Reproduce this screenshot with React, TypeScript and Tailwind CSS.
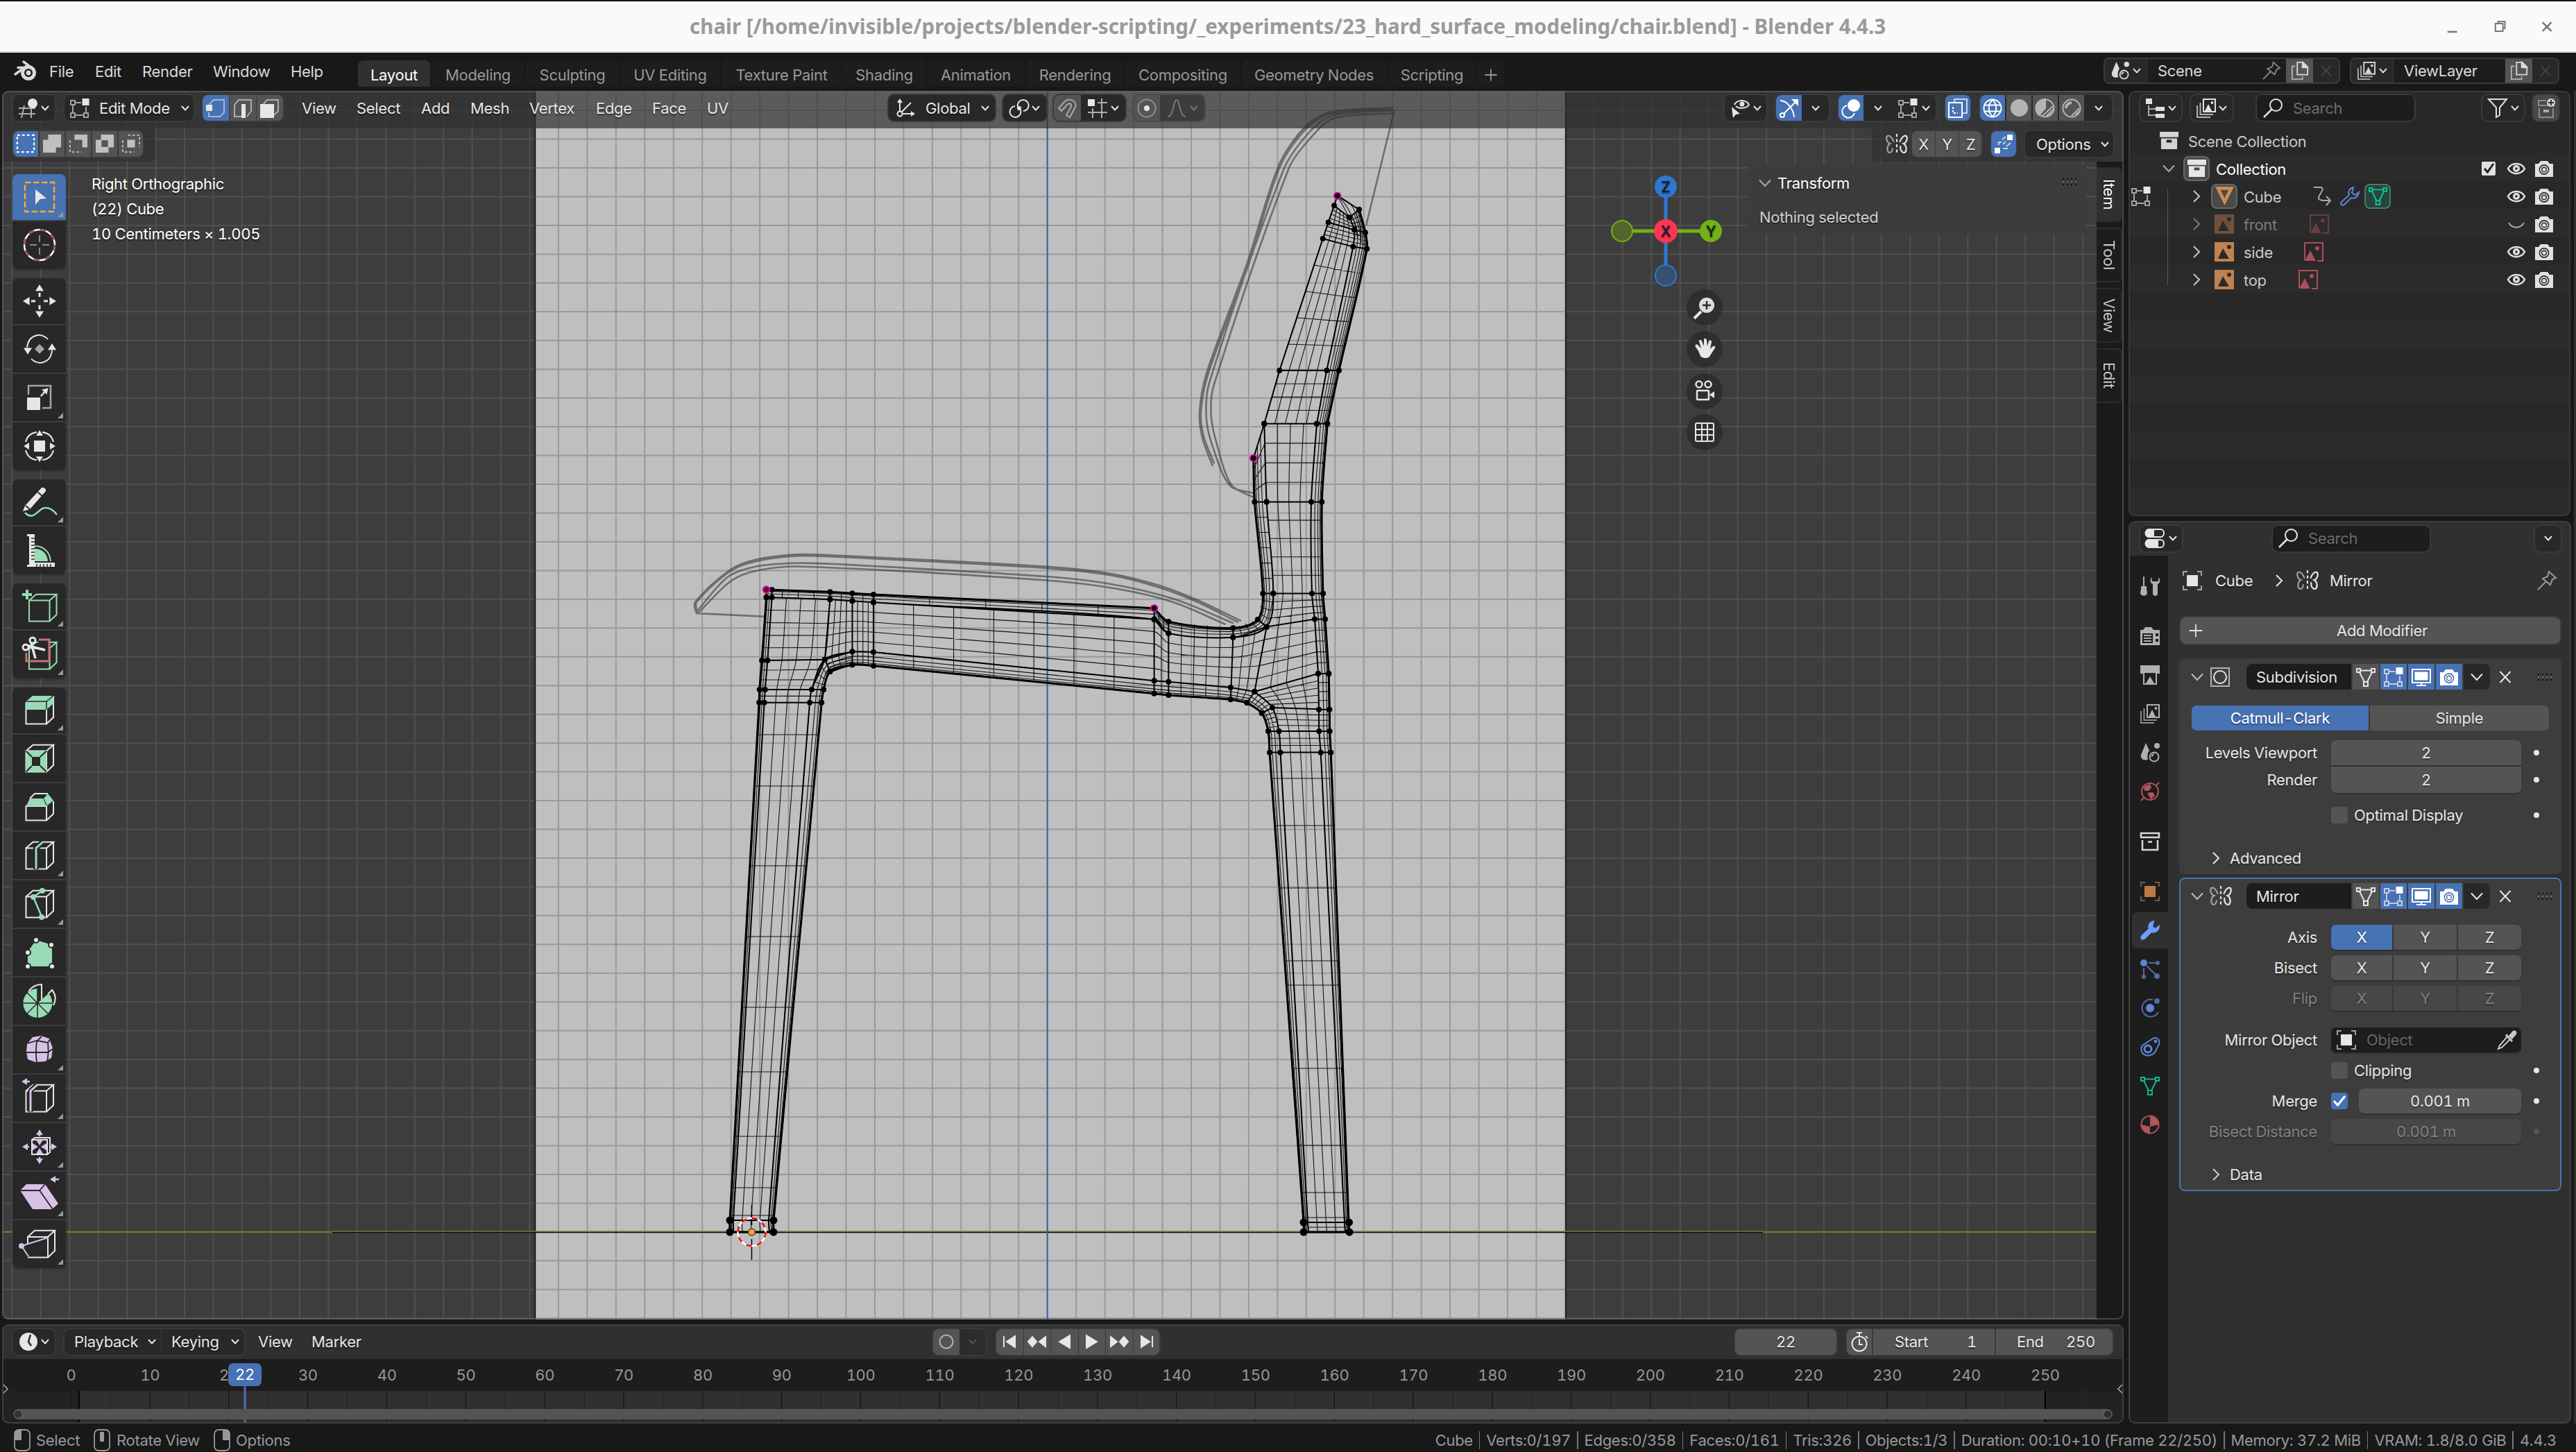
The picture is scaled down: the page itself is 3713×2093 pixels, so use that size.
import React from "react";

type Pt = [number, number];
type P = { children?: React.ReactNode; className?: string; size?: number };

/* ---------- primitives ---------- */
const Ico = ({ children, className = "", size = 28 }: P) => (
  <svg width={size} height={size} viewBox="0 0 28 28" fill="none" stroke="currentColor" strokeWidth={2} className={`shrink-0 overflow-visible ${className}`}>
    {children}
  </svg>
);
const Chev = ({ className = "" }: P) => (
  <svg width="12" height="8" viewBox="0 0 12 8" fill="none" stroke="currentColor" strokeWidth="2" className={`shrink-0 ${className}`}>
    <path d="M1 1L6 6.5L11 1" />
  </svg>
);
const ChevDown = ({ className = "" }: P) => (
  <svg width="18" height="12" viewBox="0 0 18 12" fill="none" stroke="currentColor" strokeWidth="2" className={`shrink-0 ${className}`}>
    <path d="M1 1.5L9 10L17 1.5" />
  </svg>
);
const ChevRight = ({ className = "" }: P) => (
  <svg width="12" height="18" viewBox="0 0 12 18" fill="none" stroke="currentColor" strokeWidth="2" className={`shrink-0 ${className}`}>
    <path d="M2 1L10 9L2 17" />
  </svg>
);
const Grip = ({ className = "" }: P) => (
  <svg width="22" height="12" viewBox="0 0 22 12" className={`shrink-0 ${className}`}>
    {[0, 1, 2, 3].map((i) =>
      [0, 1, 2].map((j) => <rect key={`${i}${j}`} x={i * 6 + 1} y={j * 4 + 1} width="2" height="2" fill={j === 1 ? "#777" : "#0c0c0c"} />)
    )}
  </svg>
);

/* ---------- 28px icons ---------- */
const ring = (cx: number, cy: number, r: number) => `M${cx} ${cy - r}A${r} ${r} 0 1 0 ${cx} ${cy + r}A${r} ${r} 0 1 0 ${cx} ${cy - r}Z`;
const IMeshEdit = (p: P) => (
  <Ico {...p}>
    <g opacity=".65">
      <rect x="1" y="3" width="6" height="6" /><rect x="1" y="21" width="6" height="6" /><rect x="20" y="21" width="6" height="6" />
      <path d="M7 6H16M4 9V21M7 24H20M23 12V21" />
    </g>
    <rect x="17.500" y="0" width="10" height="10" fill="currentColor" stroke="none" />
  </Ico>
);
const IMesh = (p: P) => (
  <Ico {...p}>
    <rect x="1" y="2" width="5" height="5" /><rect x="22" y="2" width="5" height="5" /><rect x="11" y="21" width="6" height="6" />
    <path d="M6 4.500H22M5 7L12 21M23 7L16 21" />
  </Ico>
);
const IScene = (p: P) => (
  <Ico {...p}>
    <path d="M8 0L13 11C10 14 10 20 11 24C4 26 0 22 1 17Z" fill="currentColor" stroke="none" />
    <circle cx="24" cy="4" r="4" fill="currentColor" stroke="none" />
    <circle cx="20" cy="20" r="6.500" /><path d="M16.500 20A3.500 3.500 0 0 1 20 16.500" />
  </Ico>
);
const IPin = (p: P) => (
  <Ico {...p}>
    <path d="M17 1L27 10L22 12L19 20L8 11L15 8ZM12.500 15.500L1 27" />
  </Ico>
);
const ICopy = (p: P) => (
  <Ico {...p}>
    <path d="M10 1H19L26 8V20H10Z" /><path d="M18 1L26 9H18Z" fill="currentColor" /><path d="M7 7H2V27H18V23" opacity=".7" />
  </Ico>
);
const ILayers = (p: P) => (
  <Ico {...p}>
    <rect x="10" y="1" width="17" height="18" /><path d="M12 18L17 8L22 18Z" fill="currentColor" stroke="none" />
    <circle cx="22.500" cy="6" r="2" fill="currentColor" stroke="none" />
    <path d="M5.500 6V23H24M1 10V27H20" opacity=".75" />
  </Ico>
);
const IX = (p: P) => (
  <Ico {...p}><path d="M6.500 6L21.500 22M21.500 6L6.500 22" /></Ico>
);
const ISearch = (p: P) => (
  <Ico {...p}><circle cx="18.500" cy="9.500" r="8.500" /><path d="M12.500 15.500L1 27" strokeWidth="2.500" /></Ico>
);
const IMirror = (p: P) => (
  <Ico {...p}>
    <path d="M14 0V28" strokeDasharray="4 3" />
    <path d="M10 11C8 5 4 1 1 3C-1 6 1 12 5 13C1 15 0 22 3 25C6 26 9 23 8 19" opacity=".6" />
    <path d="M18 11C20 5 24 1 27 3C29 6 27 12 23 13C27 15 28 22 25 25C22 26 18 23 19 16" />
  </Ico>
);
const IObject = (p: P) => (
  <Ico {...p}>
    <rect x="6" y="6" width="16" height="16" fill="currentColor" stroke="none" />
    <path d="M1 7V1H7M21 1H27V7M27 21V27H21M7 27H1V21" opacity=".65" />
  </Ico>
);
const IMonitor = (p: P) => (
  <Ico {...p}>
    <rect x="1" y="3" width="26" height="19" /><rect x="4.500" y="6.500" width="19" height="12" fill="currentColor" stroke="none" />
    <path d="M14 22V25M7 26H21" />
  </Ico>
);
const ICamera = (p: P) => (
  <Ico {...p}>
    <path
      fillRule="evenodd"
      d={"M1 7H6L9 3H19L22 7H27V26H1Z" + ring(14, 15.5, 7.4) + ring(14, 15.5, 5.8) + ring(14, 15.5, 4)}
      fill="currentColor"
      stroke="none"
    />
    <circle cx="14" cy="15.500" r="2.600" fill="currentColor" stroke="none" />
  </Ico>
);
const IEye = (p: P) => (
  <Ico {...p}>
    <path d="M2 14C7 4.500 21 4.500 26 14C21 23.500 7 23.500 2 14Z" strokeWidth="2.500" /><circle cx="14" cy="14" r="5" fill="currentColor" stroke="none" />
    <circle cx="14" cy="14" r="1.800" fill="#282828" stroke="none" />
  </Ico>
);
const ICollection = (p: P) => (
  <Ico {...p}>
    <path d="M0 1H28V9H0Z" fill="currentColor" stroke="none" /><path fillRule="evenodd" d="M2 11H26V27H2ZM10 13V17H18V13Z" fill="currentColor" stroke="none" />
  </Ico>
);
const ICollectionLine = (p: P) => (
  <Ico {...p}><path d="M1 2H27V8H1ZM3 12V26H25V12M11 14.500H17" strokeWidth="2.500" /></Ico>
);
const IImage = (p: P) => (
  <Ico {...p}>
    <path fillRule="evenodd" d="M0 0H28V28H0ZM5 24H21L12 9ZM21 4A3 3 0 1 0 21 10A3 3 0 1 0 21 4Z" fill="currentColor" stroke="none" />
  </Ico>
);
const IImageData = (p: P) => (
  <Ico {...p}>
    <path d="M1 26V1H27V27H19" /><path d="M1 27L9 12L17 27Z" fill="currentColor" stroke="none" /><circle cx="19" cy="9" r="3" fill="currentColor" stroke="none" />
  </Ico>
);
const IWrench = ({ fill, ...p }: P & { fill?: boolean }) => (
  <Ico {...p}>
    <path d="M19 1C13 3 11 7 13 12L2 22C0 26 3 28 6 26L16 16C21 18 26 15 27 8L22 12L17 9Z" fill={fill ? "currentColor" : "none"} />
  </Ico>
);
const IBall = (p: P) => <Ico {...p}><circle cx="14" cy="14" r="13" fill="currentColor" stroke="none" /></Ico>;

/* ---------- chair mesh ---------- */
const lerp = (a: Pt, b: Pt, t: number): Pt => [a[0] + (b[0] - a[0]) * t, a[1] + (b[1] - a[1]) * t];
const line = (pts: Pt[]) => "M" + pts.map((p) => `${p[0].toFixed(1)} ${p[1].toFixed(1)}`).join("L");
const smooth = (p: Pt[]) => {
  let d = `M${p[0][0]} ${p[0][1]}`;
  for (let i = 0; i < p.length - 1; i++) {
    const a = p[Math.max(0, i - 1)], b = p[i], c = p[i + 1], e = p[Math.min(p.length - 1, i + 2)];
    const len = Math.hypot(c[0] - b[0], c[1] - b[1]);
    const tan = (m: Pt, n: Pt): Pt => {
      const l = Math.hypot(n[0] - m[0], n[1] - m[1]) || 1;
      return [((n[0] - m[0]) / l) * len * 0.3, ((n[1] - m[1]) / l) * len * 0.3];
    };
    const t1 = tan(a, c), t2 = tan(b, e);
    d += `C${(b[0] + t1[0]).toFixed(1)} ${(b[1] + t1[1]).toFixed(1)} ${(c[0] - t2[0]).toFixed(1)} ${(c[1] - t2[1]).toFixed(1)} ${c[0].toFixed(1)} ${c[1].toFixed(1)}`;
  }
  return d;
};
/* fine wires between two rails, plus rungs in each span; bias > 1 crowds the wires towards rail b */
const loft = (a: Pt[], b: Pt[], wires: number, rungs: number[], bias = 1) => {
  const spans = Math.min(a.length, b.length) - 1;
  let d = "";
  for (let k = 0; k <= wires; k++) {
    const t = 1 - Math.pow(1 - k / wires, bias);
    d += smooth(a.slice(0, spans + 1).map((p, i) => lerp(p, b[i], t)));
  }
  rungs.slice(0, spans).forEach((n, i) => {
    for (let k = 1; k <= n; k++) d += line([lerp(a[i], a[i + 1], k / (n + 1)), lerp(b[i], b[i + 1], k / (n + 1))]);
  });
  return d;
};

const LA: Pt[] = [[1104.6, 861], [1098.2, 952], [1094.8, 994], [1094.2, 1012.7], [1052, 1759], [1052, 1776]];
const LB: Pt[] = [[1112.6, 861], [1106.3, 952], [1102.8, 994], [1101.7, 1012.7], [1057, 1759], [1057, 1776]];
const LC: Pt[] = [[1196.4, 864], [1188.9, 950.7], [1170, 994], [1167.1, 1012.7], [1108, 1759], [1109, 1776]];
const LC2: Pt[] = [[1228.5, 939.3], [1188.9, 950.7], [1170, 994], [1167.1, 1012.7], [1108, 1759], [1109, 1776]];
const LD: Pt[] = [[1228.5, 958.3], [1196.4, 968], [1187.2, 994], [1184.3, 1012.7], [1115, 1759], [1115, 1776]];
const ST: Pt[] = [[1104.6, 850], [1196.4, 853.3], [1228.5, 855.3], [1259, 857], [1663.6, 876.7]];
const SU: Pt[] = [[1104.6, 861], [1196.4, 864], [1228.5, 866.3], [1259, 868.3], [1663.6, 892.7]];
const SM: Pt[] = [[1196.4, 864], [1228.5, 866.3], [1259, 868.3], [1663.6, 892.7], [1684.3, 912.7], [1777.3, 918.7], [1825.5, 903.7]];
const SL: Pt[] = [[1188.9, 950.7], [1228.5, 939.3], [1259, 940], [1663.6, 981.3], [1684.3, 982.7], [1773.8, 991], [1808.3, 997]];
const SO: Pt[] = [[1196.4, 968], [1228.5, 958.3], [1259, 959.7], [1663.6, 999.7], [1684.3, 1002], [1773.8, 1008.3], [1797.4, 1013]];
const CT: Pt[] = [[1663.6, 876.7], [1684.3, 896], [1777.3, 905.3], [1812.9, 893], [1820.3, 855.6], [1808.3, 723.5], [1806.7, 660.4]];
const CI: Pt[] = [[1663.6, 892.7], [1684.3, 912.7], [1777.3, 918.7], [1825.5, 903.7], [1835.3, 855.6], [1825.7, 723.5], [1822.3, 610.7]];
const RA: Pt[] = [[1797.4, 1013], [1818.6, 1028], [1828, 1054], [1830, 1084.7], [1879, 1762], [1879.5, 1776]];
const RB: Pt[] = [[1808.3, 997], [1834, 1020], [1843.5, 1054], [1845.5, 1084.7], [1885, 1762], [1886, 1776]];
const RC: Pt[] = [[1900, 971], [1901, 1022.7], [1901.3, 1054], [1903.7, 1084.7], [1938, 1762], [1939, 1776]];
const RD: Pt[] = [[1915.3, 971], [1916.3, 1022.7], [1916.7, 1054], [1918.3, 1084.7], [1944, 1762], [1945, 1776]];
const BA: Pt[] = [[1923, 296.2], [1914.7, 320.5], [1906.7, 344], [1844.3, 534], [1822.3, 610.7]];
const BC: Pt[] = [[1945, 313.5], [1952, 331.3], [1950.3, 355.6], [1912.3, 534], [1898, 610.7]];
const BD: Pt[] = [[1959, 302], [1968, 335.2], [1970.3, 358.8], [1930, 534], [1913.3, 610.7]];
const NA: Pt[] = [[1822.3, 610.7], [1825.7, 723.5], [1835.3, 855.6], [1825.7, 903.4], [1808.3, 997]];
const NC: Pt[] = [[1898, 610.7], [1890, 723.5], [1891, 855.6], [1895, 892.6], [1900, 971]];
const ND: Pt[] = [[1913.3, 610.7], [1905.3, 723.5], [1907, 855.6], [1910, 892.6], [1915.3, 971]];

const thin = [
  loft(LB, LA, 3, [4, 2, 1, 0, 0], 1.5), loft(LB, LC, 4, [4, 2, 1, 0, 0]), loft(LC2, LD, 4, [3, 3, 1, 0, 0], 2.2),
  loft(SU, ST, 3, [3, 1, 1, 4], 1.5), loft(SM, SL, 5, [3, 3, 6, 1, 4, 2]), loft(SL, SO, 5, [3, 3, 6, 1, 4, 2], 2),
  loft(CI, CT, 5, [2, 4, 3, 3, 5, 3], 2), loft(RB, RA, 4, [4, 4, 2, 0, 0], 2), loft(RB, RC, 4, [4, 3, 2, 0, 1]), loft(RC, RD, 4, [3, 3, 2, 0, 1], 2),
  loft(BA, BC, 5, [3, 3, 4, 3]), loft(BC, BD, 7, [3, 3, 4, 3], 2), loft(NA, NC, 4, [3, 4, 3, 4]), loft(NC, ND, 5, [3, 4, 3, 4], 2),
  line([[1927.7, 282.2], [1945, 313.5]]), smooth([[1927.7, 282.2], [1940, 296], [1952, 320], [1957, 345]]),
  smooth([[1927.7, 282.2], [1948, 296], [1960, 325], [1962, 350]]),
  ...[1059, 1133, 1248, 1350, 1452, 1545, 1638, 1712, 1752].map((y) => line([[1094 - (y - 1012) * 0.0565, y], [1184.3 - (y - 1012) * 0.093, y]])),
  ...[1122, 1190, 1280, 1385, 1420, 1540, 1651, 1719, 1755].map((y) => line([[1830 + (y - 1084) * 0.0724, y], [1918.3 + (y - 1084) * 0.038, y]])),
].join("");

const thick = [
  smooth(LA), smooth(LB), smooth(LC.slice(1)), smooth(LD), smooth(LC2), line(ST), line(SU), smooth(SM), line(SL), smooth(SO),
  smooth(CT), smooth(CI), smooth(RA), smooth(RB), smooth(RC), smooth(RD), line(BA), smooth(BC), smooth(BD), smooth(NC), smooth(ND),
  line([[1104.6, 850], [1104.6, 861]]), line([[1112.6, 850], [1112.6, 861]]),
  line([[1927.7, 282.2], [1923, 296.2]]), line([[1927.7, 282.2], [1959, 302]]), line([[1923, 296.2], [1945, 313.5], [1959, 302]]),
  line([[1914.7, 320.5], [1952, 331.3], [1968, 335.2]]), line([[1906.7, 344], [1950.3, 355.6], [1970.3, 358.8]]),
  line([[1844.3, 534], [1930, 534]]), line([[1822.3, 610.7], [1913.3, 610.7]]), line([[1806.7, 660.4], [1822.3, 610.7]]),
  line([[1808.3, 723.5], [1905.3, 723.5]]), line([[1820.3, 855.6], [1907, 855.6]]),
  line([[1812.9, 893], [1825.7, 903.4], [1895, 892.6], [1910, 892.6]]), line([[1825.7, 903.4], [1808.3, 997], [1900, 971], [1915.3, 971]]),
  line([[1797.4, 1013], [1808.3, 997]]), line([[1818.6, 1028], [1834, 1020], [1916, 1022.7]]), line([[1828, 1054], [1916.7, 1054]]), line([[1830, 1084.5], [1918, 1084.5]]),
  line([[1879, 1762], [1945, 1762]]), line([[1879, 1776], [1945, 1776]]), line([[1052, 1759], [1115, 1759]]), line([[1052, 1776], [1115, 1776]]),
  line([[1098.2, 952], [1188.9, 950.7], [1196.4, 968]]), line([[1094.8, 994], [1187.2, 994]]), line([[1094.2, 1012.7], [1184.3, 1012.7]]),
  line([[1196.4, 853.3], [1196.4, 864], [1188.9, 950.7]]), line([[1228.5, 855.3], [1228.5, 958.3]]), line([[1259, 857], [1259, 959.7]]),
  line([[1663.6, 876.7], [1663.6, 999.7]]), line([[1684.3, 896], [1684.3, 1002]]), line([[1777.3, 905.3], [1777.3, 918.7], [1773.8, 1008.3]]),
].join("");
/* outer silhouette, where many wires overlap */
const rim = [smooth(LA), smooth(LD), smooth(SO), smooth(CT), smooth(RA), smooth(RD), smooth(BD), smooth(ND), line(ST), line([[1052, 1776], [1115, 1776]]), line([[1879, 1776], [1945, 1776]])].join("");

const verts: Pt[] = [
  ...LA, ...LB.slice(0, 4), ...LC.slice(0, 4), ...LD, ...ST.slice(1, 4), [1112.6, 850], ...SU, ...SM, ...SL, ...SO, ...CT.slice(1, 6), ...CI, ...RA, ...RB.slice(0, 4),
  ...RC.slice(0, 4), ...RD, ...BA, ...BC, ...BD, ...NA, ...NC, ...ND,
];
const bigVerts: Pt[] = [[1052, 1759], [1052, 1776], [1115, 1759], [1115, 1776], [1879, 1762], [1879, 1776], [1944.5, 1762], [1945, 1776]];
const pinkVerts: Pt[] = [[1104.6, 850], [1663.6, 876.7], [1927.7, 282.2], [1806.7, 660.4]];

const sketch: Pt[][] = [
  [[1748, 672], [1733, 631], [1729, 593], [1740, 535], [1796.7, 382], [1843, 239], [1880, 184], [1916, 162], [2008, 155]],
  [[1750, 668], [1735, 629], [1731, 593], [1742, 537], [1799, 383], [1845, 240], [1882, 186], [1918, 164], [2008, 157]],
  [[1806.7, 711], [1773, 700], [1750, 650], [1739, 605], [1743, 552], [1850, 245], [1886, 192], [1920, 167], [2008, 159]],
  [[1806.7, 717], [1775, 699], [1755, 644], [1745.7, 599], [1750, 554], [1858, 242], [1888, 200], [1922, 171], [2008, 163]],
  [[2010, 158], [1969, 325]],
  [[1003, 883], [1001.8, 868], [1051.8, 821.7], [1089, 806.7], [1146.5, 799.3], [1192.4, 800], [1508, 816.7], [1600, 826.7], [1668.8, 843.3], [1726, 865], [1789, 895]],
  [[1005, 883], [1004, 868], [1053, 823], [1090, 809], [1146.5, 801.5], [1192.4, 802], [1508, 819], [1600, 829], [1668, 846], [1724, 867], [1785, 897]],
  [[1003, 883], [1048.9, 831.7], [1089, 816.7], [1146.5, 811.7], [1209.6, 813.3], [1508, 831], [1600, 841.7], [1691.8, 863.3], [1777.9, 898.3]],
  [[1006, 884], [1054.6, 836.7], [1094.8, 821.7], [1158, 816.7], [1508, 836.5], [1611.4, 849], [1691.8, 868.3], [1766.4, 900]],
  [[1003, 884], [1103.4, 888.7]],
];

const S = 41.456;
const gx = Array.from({ length: 73 }, (_, i) => 17.3 + i * S);
const gy = Array.from({ length: 43 }, (_, i) => 159.1 + i * S);

const Scene3D = () => (
  <svg viewBox="3 131 3058 1771" width="3058" height="1771" className="absolute left-0 top-0" fill="none">
    <rect x="3" y="131" width="3058" height="1771" fill="#3d3d3d" />
    <path d={gx.map((x) => `M${x} 131V1902`).join("") + gy.map((y) => `M3 ${y}H3061`).join("")} stroke="#505050" strokeWidth="2" />
    <path d="M3 1775.700H479M2541 1775.700H3061" stroke="#5d8a27" strokeWidth="2" />
    <rect x="772" y="131" width="1485" height="1771" fill="#bfbfbf" />
    <path d={gx.filter((x) => x > 772 && x < 2257).map((x) => `M${x} 131V1902`).join("") + gy.map((y) => `M772 ${y}H2257`).join("")} stroke="#999" strokeWidth="2" />
    <path d="M771.500 131V1902M2257 131V1902" stroke="#0a0a0a" strokeWidth="1.500" />
    <path d="M479 1775H2541" stroke="#6f8f38" strokeWidth="1.500" />
    <path d="M479 1776.500H2541" stroke="#0c0c0c" strokeWidth="1.500" />
    <path d="M1509.700 131V1902" stroke="#2e66ab" strokeWidth="2" />
    <path d={sketch.map(smooth).join("")} stroke="#3c3c3c" strokeOpacity=".62" strokeWidth="2.600" />
    <path d={thin} stroke="#000" strokeOpacity=".9" strokeWidth="1.100" />
    <path d={thick} stroke="#000" strokeWidth="2" />
    <path d={rim} stroke="#000" strokeWidth="3" />
    {verts.map((v, i) => <circle key={i} cx={v[0]} cy={v[1]} r="4" fill="#000" />)}
    {bigVerts.map((v, i) => <circle key={i} cx={v[0]} cy={v[1]} r="5.500" fill="#000" />)}
    {pinkVerts.map((v, i) => <circle key={i} cx={v[0]} cy={v[1]} r="4.800" fill={i === 0 ? "#6d004f" : "#000"} stroke="#e0109e" strokeWidth="2" />)}
    <path d="M1083.500 1737V1766M1083.500 1786V1816" stroke="#000" strokeWidth="1.500" />
    <circle cx="1083.500" cy="1776" r="20" stroke="#fff" strokeWidth="2.500" />
    <circle cx="1083.500" cy="1776" r="20" stroke="#f00" strokeWidth="2.500" strokeDasharray="7.850" />
    <circle cx="1083.500" cy="1776" r="5" fill="#ff9d2a" stroke="#5a4630" strokeWidth="1.500" />
    {/* navigation gizmo */}
    <path d="M2401 333V269M2401 333V397" stroke="#2f77d0" strokeWidth="5" />
    <path d="M2338 333H2466" stroke="#75b114" strokeWidth="5" />
    <circle cx="2401" cy="269" r="16" fill="#2f77d0" />
    <circle cx="2401" cy="397" r="15" fill="#37506f" stroke="#2f77d0" strokeWidth="2" />
    <circle cx="2338" cy="333" r="15" fill="#52662d" stroke="#75b114" strokeWidth="2" />
    <circle cx="2466" cy="333" r="16" fill="#75b114" />
    <circle cx="2401" cy="333" r="17" fill="#ff3552" />
    <g fontFamily="Inter, sans-serif" fontSize="21" fontWeight="600" textAnchor="middle" fill="#15202c">
      <text x="2401" y="276.500">Z</text><text x="2401" y="340.500">X</text><text x="2466" y="340.500">Y</text>
    </g>
    {[443, 503, 564, 623].map((y) => <circle key={y} cx="2457" cy={y} r="26" fill="#2b2b2b" fillOpacity=".85" />)}
    <g stroke="#e6e6e6" strokeWidth="2.500">
      <circle cx="2460" cy="440" r="11" fill="#dcdcdc" stroke="none" /><path d="M2452 449L2442 459" strokeWidth="4" />
      <path d="M2460 434V446M2454 440H2466" stroke="#2b2b2b" />
      <g transform="translate(0 1)">
        <path d="M2448 505L2444 499C2442 496 2446 494 2448 497L2452 501L2449 491C2449 488 2452 488 2453 491L2456 498V489C2456 486 2459 486 2460 489L2461 498L2463 491C2464 488 2467 489 2467 492L2465 502L2468 499C2471 496 2474 499 2471 502L2464 513C2462 516 2453 516 2451 512Z" fill="#e6e6e6" stroke="none" />
        <circle cx="2449" cy="553" r="4.500" /><circle cx="2462" cy="553" r="4.500" />
        <rect x="2446" y="562" width="17" height="13" rx="1" /><path d="M2464 568L2471 563V573Z" fill="#e6e6e6" stroke="none" />
        <rect x="2444" y="609" width="26" height="26" rx="2" strokeWidth="2" /><path d="M2453 609V635M2461 609V635M2444 618H2470M2444 626H2470" strokeWidth="2" />
      </g>
    </g>
  </svg>
);

/* ---------- toolbar ---------- */
const CUBE = "M4.500 13.500H34V43.500H4.500ZM4.500 13.500L14.500 4.700H44L34 13.500M44 4.700V34L34 43.500";
const G = "#98dbb4", V = "#d7c1e6", W = "#e6e6e6";
const Tri = (x: number, y: number, r: number, a: number, c: string) => (
  <path key={`${x}-${y}-${a}`} d={`M${-r} ${r * 0.6}L0 ${-r}L${r} ${r * 0.6}Z`} transform={`translate(${x} ${y}) rotate(${a})`} fill={c} stroke="none" />
);
const tools: { i: React.ReactNode; more?: boolean; on?: boolean }[][] = [
  [
    { on: true, more: true, i: <><rect x="3" y="3" width="42" height="42" stroke="#ffab29" strokeWidth="2.500" strokeDasharray="8.500 3.500" /><path d="M18 13L34 26L25 27L18 35Z" fill={W} stroke="none" /></> },
    { i: <><circle cx="24" cy="24" r="22" stroke="#fff" strokeWidth="2.500" /><circle cx="24" cy="24" r="22" stroke="#a04a4a" strokeWidth="2.500" strokeDasharray="8.640" /><path d="M24 10V20M24 28V38M10 24H20M28 24H38" stroke="#aaa" strokeWidth="1.500" /></> },
  ],
  [
    { i: <>{Tri(24, 6, 6, 0, W)}{Tri(24, 42, 6, 180, W)}{Tri(6, 24, 6, 270, W)}{Tri(42, 24, 6, 90, W)}<path d="M24 12V18M24 30V36M12 24H18M30 24H36" strokeWidth="3" /></> },
    { i: <><path d="M6 22C8 2 28 0 36 10M42 26C40 46 20 48 12 38" />{Tri(7, 26, 6, 180, W)}{Tri(42, 22, 6, 0, W)}<path d="M24 17L31 24L24 31L17 24Z" fill="#a5a5a5" stroke="none" /></> },
    { more: true, i: <><path d="M8 20V7H40V39H28" stroke="#a5a5a5" strokeWidth="2.500" /><rect x="6" y="24" width="19" height="18" fill={W} stroke="none" /><path d="M26 22L32 15" strokeWidth="2.500" />{Tri(33, 14, 5, 45, W)}</> },
    { i: <><path d="M4 18C6 10 12 5 20 4M28 4C36 5 42 10 44 18M4 30C6 38 12 43 20 44M28 44C36 43 42 38 44 30" /><rect x="16" y="16" width="16" height="16" fill={W} stroke="none" />{Tri(24, 6, 5, 0, W)}{Tri(24, 42, 5, 180, W)}{Tri(6, 24, 5, 270, W)}{Tri(42, 24, 5, 90, W)}</> },
  ],
  [
    { more: true, i: <><path d="M0 37L3 29L27 3C30 2 34 5 33 8L10 34Z" fill={W} stroke="none" /><path d="M21 9L28 15M4 29L10 34" stroke="#282828" /><path d="M3 39C14 50 20 38 28 33C36 30 43 34 49 42" stroke={G} strokeWidth="2.500" /></> },
    { i: <><path d="M6 1H17V42H46V48H6V45H9V4H6Z" fill={W} stroke="none" /><path d="M12 7H17M12 12H17M12 17H17M12 22H17M12 27H17M12 32H17M12 37H17M20 44V48M25 44V48M30 44V48M35 44V48M40 44V48" stroke="#282828" strokeWidth="1.500" /><path d="M17 40V22C28 22 35 29 36 40Z" fill={G} stroke="none" /><path d="M17 18C30 18 39 27 40 40" stroke={G} /></> },
  ],
  [
    { more: true, i: <><g transform="translate(4.500 2)"><path d={CUBE} stroke={G} /></g><path d="M6 0V14M-1 7H13" stroke={G} strokeWidth="4" /></> },
    { more: true, i: <><g transform="translate(4.500 2)"><path d={CUBE} stroke={G} /></g><path d="M4 24V34H38V3H22V34H4Z" fill="#282828" stroke="none" /><path d="M5 22V34H38V3H23" stroke="#c5756d" strokeWidth="3" /><circle cx="14" cy="4" r="4" stroke={W} strokeWidth="3" /><circle cx="4" cy="14" r="4" stroke={W} strokeWidth="3" /><path d="M12 8L18 30M8 12L32 18" stroke={W} strokeWidth="3.500" /></> },
  ],
  [
    { more: true, i: <><path d={CUBE} /><path d="M4.500 23V11L14 3H44V14L34 23Z" fill={G} stroke="none" /><path d="M4.500 11H34L44 3M34 11V23" stroke="#282828" strokeWidth="1.500" /></> },
    { i: <><path d={CUBE} /><path fillRule="evenodd" d="M4.500 13.500H34V43.500H4.500ZM13 22V35H25V22Z" fill={G} stroke="none" /><path d="M4.500 13.500L13 22M34 13.500L25 22M4.500 43.500L13 35M34 43.500L25 35" stroke="#282828" /></> },
    { i: <><path d="M4.500 23H34V43.500H4.500ZM34 43.500L44 34V16M10 12L17 5H36" /><path d="M4.500 23L10 12H29L34 23ZM30 12L36 5L44 15L35 22Z" fill={G} stroke="none" /></> },
    { more: true, i: <><path d={CUBE} /><path d="M19 44V13.500L29 4.500" stroke="#282828" strokeWidth="8" /><path d="M19 43.500V13.500L29 4.500" stroke={G} strokeWidth="3" /></> },
    { more: true, i: <><path d={CUBE} /><path d="M28 5L15 14L27 42" stroke={G} strokeWidth="2.500" /><g fill={G} stroke="none"><circle cx="28" cy="5" r="4" /><circle cx="15" cy="14" r="4" /><circle cx="27" cy="43" r="4" /></g></> },
    { i: <><path d="M7 44V23L19 6L42 13V44Z" fill={G} stroke="none" /><g fill={W} stroke="#282828"><circle cx="7" cy="44" r="4" /><circle cx="7" cy="24" r="4" /><circle cx="19" cy="6" r="4" /><circle cx="41" cy="13" r="4" /><circle cx="42" cy="44" r="4" /></g></> },
    { i: <><path d="M8 10C14 2 20 0 27 0V22M36 14L42 8C47 14 48 22 44 30" /><path d="M21 27V6A21 21 0 1 0 37 13Z" fill={G} stroke="none" /><path d="M0 27H42M21 6V48M6 12L36 42M6 42L21 27" stroke="#282828" strokeWidth="1.500" /></> },
    { more: true, i: <><path d="M6 16L14 6L26 4L38 8L43 22L41 36L32 41L18 42L7 38L5 27Z" fill={V} stroke="none" /><path d="M5 28H36L43 23M20 42C18 30 19 20 20 12L27 5M7 15L20 11L36 14L40 8M36 14C37 24 37 32 35 41" stroke="#282828" strokeWidth="1.800" /></> },
    { more: true, i: <><path d={CUBE} /><path d="M11 44V13.500L20 4.500" stroke="#282828" strokeWidth="7" /><path d="M11 43.500V13.500L21 4.500" stroke={V} strokeWidth="3" />{Tri(3, 0, 5, 270, V)}<path d="M5 0H10" stroke={V} strokeWidth="2.500" /></> },
    { more: true, i: <><path d="M13 14H35V35H13ZM13 14L17 11H39V32L35 35" />{[0, 90, 180, 270].map((a) => <g key={a} transform={`rotate(${a} 24 24)`}>{Tri(24, 4, 5, 0, V)}{Tri(24, 17, 5, 180, V)}<path d="M24 6V9" stroke={V} strokeWidth="2.500" /></g>)}</> },
    { more: true, i: <><path d="M-4 17L5 8H32L51 36L42 44H14Z" fill={V} stroke="none" /><path d="M-4 17H24L32 8M24 17L43 44" stroke="#282828" strokeWidth="1.800" />{Tri(44, 1, 5, 270, V)}<path d="M46 1H52" stroke={V} strokeWidth="2.500" /></> },
    { more: true, i: <><path d="M7 24V14L17 4.700H46L36 14V43.500H7M46 4.700V34L36 43.500M8 14H36" /><path d="M-2 27L36 15M-2 27L8 42" stroke={V} /><circle cx="-2" cy="27" r="4" fill={V} stroke="none" /></> },
  ],
];
const Toolbar = () => (
  <div className="flex w-[77px] flex-col gap-[14px]">
    {tools.map((g, gi) => (
      <div key={gi} className="flex flex-col gap-[2px] overflow-hidden rounded-[8px] bg-[#3d3d3d] shadow-[0_2px_3px_rgba(0,0,0,.3)]">
        {g.map((t, ti) => (
          <div key={ti} className={`relative flex items-center justify-center pb-px ${ti === 0 ? "h-[66px]" : "h-[68px]"} ${t.on ? "bg-[#4772b3]" : "bg-[#282828]"}`}>
            <svg width="48" height="48" viewBox="0 0 48 48" fill="none" stroke={W} strokeWidth="2" className="overflow-visible">{t.i}</svg>
            {t.more && <span className="absolute bottom-[4px] right-[4px] h-[8px] w-[8px] bg-[#999] [clip-path:polygon(100%_0,100%_100%,0_100%)]" />}
          </div>
        ))}
      </div>
    ))}
  </div>
);

/* ---------- small building blocks ---------- */
const Btn = ({ children, className = "" }: P) => (
  <div className={`flex h-[37px] shrink-0 items-center rounded-[8px] bg-[#282828] shadow-[0_0_0_2px_#3a3a3a] ${className}`}>{children}</div>
);
const Tab = ({ children, className = "" }: P) => (
  <div className={`flex h-[38px] shrink-0 items-center justify-center rounded-t-[8px] pt-[4px] ${className}`}>{children}</div>
);
const Cell = ({ children, className = "" }: P) => (
  <div className={`flex h-full shrink-0 items-center justify-center ${className}`}>{children}</div>
);

const TitleBar = () => (
  <div className="flex h-[76px] shrink-0 items-center border-b-2 border-t-2 border-b-[#d6d9d6] border-t-[#151515] bg-[#fafafa]">
    <div className="w-[994px] shrink-0" />
    <div className="w-[1724px] shrink-0 whitespace-nowrap font-['Noto_Sans'] text-[29.5px] font-bold tracking-normal text-[#9a9a9a]">
      chair [/home/invisible/projects/blender-scripting/_experiments/23_hard_surface_modeling/chair.blend] - Blender 4.4.3
    </div>
    <svg width="200" height="30" viewBox="0 0 200 30" fill="none" stroke="#777" strokeWidth="2" className="ml-[798px]">
      <path d="M12 23H26" strokeWidth="2.500" /><path d="M82 11H93V22H82ZM86 11V8H96V18H93" /><path d="M151 9L164 22M164 9L151 22" strokeWidth="2.500" />
    </svg>
  </div>
);

const TopBar = () => (
  <div className="flex h-[54px] shrink-0 bg-[#181818] text-[#d9d9d9]">
    <svg width="34" height="28" viewBox="0 0 34 28" className="ml-[20px] mt-[12px] shrink-0 overflow-visible" fill="none" stroke="#d9d9d9">
      <circle cx="21" cy="17" r="8.500" strokeWidth="5" /><circle cx="21" cy="17" r="3.500" fill="#d9d9d9" stroke="none" />
      <path d="M2 19L20 6M6 9.500H20M14 1L25 9.500" strokeWidth="3.500" strokeLinecap="round" />
    </svg>
    <div className="ml-[17px] flex h-[54px] w-[445px] shrink-0 items-center">
      <span className="w-[66px]">File</span><span className="w-[68px]">Edit</span><span className="w-[102px]">Render</span><span className="w-[112px]">Window</span><span>Help</span>
    </div>
    <div className="mt-[11px] flex shrink-0 gap-[2px] text-[#989898]">
      <Tab className="w-[104px] bg-[#303030] text-white">Layout</Tab>
      <Tab className="w-[134px] bg-[#1d1d1d]">Modeling</Tab>
      <Tab className="w-[134px] bg-[#1d1d1d]">Sculpting</Tab>
      <Tab className="w-[144px] bg-[#1d1d1d]">UV Editing</Tab>
      <Tab className="w-[173px] bg-[#1d1d1d]">Texture Paint</Tab>
      <Tab className="w-[119px] bg-[#1d1d1d]">Shading</Tab>
      <Tab className="w-[141px] bg-[#1d1d1d]">Animation</Tab>
      <Tab className="w-[141px] bg-[#1d1d1d]">Rendering</Tab>
      <Tab className="w-[166px] bg-[#1d1d1d]">Compositing</Tab>
      <Tab className="w-[208px] bg-[#1d1d1d]">Geometry Nodes</Tab>
      <Tab className="w-[128px] bg-[#1d1d1d]">Scripting</Tab>
      <Tab className="w-[38px] bg-[#1d1d1d]"><Ico size={20}><path d="M14 2V26M2 14H26" strokeWidth="2.500" /></Ico></Tab>
    </div>
    <div className="ml-auto mr-[24px] mt-[7px] flex h-[38px] gap-[14px]">
      <div className="flex h-full w-[341px] overflow-hidden rounded-[8px] border-2 border-[#3a3a3a] bg-[#282828]">
        <Cell className="w-[60px] gap-[5px]"><IScene size={26} /><Chev /></Cell>
        <Cell className="w-[201px] justify-between! border-l border-[#3a3a3a] bg-[#1d1d1d] pl-[15px] pr-[8px]">Scene<IPin className="text-[#888]" size={26} /></Cell>
        <Cell className="w-[39px] bg-[#545454]"><ICopy size={26} /></Cell>
        <Cell className="w-[37px] text-[#444]"><IX size={26} /></Cell>
      </div>
      <div className="flex h-full w-[302px] overflow-hidden rounded-[8px] border-2 border-[#3a3a3a] bg-[#282828]">
        <Cell className="w-[60px] gap-[5px]"><ILayers size={26} /><Chev /></Cell>
        <Cell className="w-[162px] justify-start! border-l border-[#3a3a3a] bg-[#1d1d1d] pl-[15px]">ViewLayer</Cell>
        <Cell className="w-[39px] bg-[#545454]"><ICopy size={26} /></Cell>
        <Cell className="w-[37px] text-[#444]"><IX size={26} /></Cell>
      </div>
    </div>
  </div>
);

const SelBox = ({ children, className = "" }: P) => <Cell className={`w-[36px] ${className}`}><Ico size={26}>{children}</Ico></Cell>;

const ViewHeader = () => (
  <div className="flex h-[54px] shrink-0 items-center bg-[#303030]/70 pb-[5px] text-[#e6e6e6]">
    <Btn className="ml-[16px] w-[60px] justify-center gap-[4px]">
      <Ico size={28}><path d="M0 14H24M0 22H24M8 10L4 28M18 14L18 28" opacity=".7" /><circle cx="20" cy="7" r="7" fill="currentColor" stroke="none" /></Ico><Chev />
    </Btn>
    <Btn className="ml-[14px] w-[186px] pl-[8px]"><IMeshEdit /><span className="ml-[14px] w-[112px]">Edit Mode</span><Chev className="ml-[6px]" /></Btn>
    <Btn className="ml-[13px] w-[116px] gap-px overflow-hidden bg-[#3a3a3a]!">
      <Cell className="w-[38px] bg-[#4772b3]"><Ico><path d="M4 9L11 2H26V20L20 26H4V20" opacity=".6" /><rect x="0" y="9" width="9" height="9" fill="currentColor" stroke="none" /></Ico></Cell>
      <Cell className="w-[38px] bg-[#545454]"><Ico><path d="M14 26H2V9L8 2H26V18L20 26" opacity=".6" /><rect x="12" y="8" width="6" height="20" fill="currentColor" stroke="none" /></Ico></Cell>
      <Cell className="w-[38px] bg-[#545454]"><Ico><path d="M4 9L10 2H26V18L20 24" opacity=".6" /><rect x="0" y="8" width="20" height="20" fill="currentColor" stroke="none" /></Ico></Cell>
    </Btn>
    <div className="ml-[27px] flex w-[846px] shrink-0">
      <span className="w-[79px]">View</span><span className="w-[93px]">Select</span><span className="w-[71px]">Add</span><span className="w-[85px]">Mesh</span>
      <span className="w-[96px]">Vertex</span><span className="w-[81px]">Edge</span><span className="w-[79px]">Face</span><span>UV</span>
    </div>
    <Btn className="w-[153px] pl-[10px]"><Ico><path d="M6 2V22H26M6 22L22 6" /><path d="M2 6L6 0L10 6ZM22 18L28 22L22 26Z" fill="currentColor" stroke="none" /><circle cx="6" cy="22" r="3.500" fill="#282828" /></Ico><span className="ml-[15px] w-[80px]">Global</span><Chev /></Btn>
    <Btn className="ml-[12px] w-[62px] justify-center gap-[4px]"><Ico><path d="M12 12A8 8 0 1 1 20 18M16 16A8 8 0 1 1 8 11" /><circle cx="14" cy="14" r="3" fill="currentColor" stroke="none" /></Ico><Chev /></Btn>
    <Btn className="ml-[11px] w-[103px] overflow-hidden">
      <Cell className="w-[39px] bg-[#545454] text-[#aaa]"><Ico><path d="M1 14L10 4C17 -2 28 5 25 12L17 27L12 24L19 12C20 7 16 6 13 9L5 18Z" /></Ico></Cell>
      <Cell className="w-[64px] gap-[5px]"><Ico><rect x="0" y="1" width="10" height="10" fill="currentColor" stroke="none" /><path d="M14 6H28M20 0V28M0 20H28M7 14V28" opacity=".7" /></Ico><Chev /></Cell>
    </Btn>
    <Btn className="ml-[12px] w-[102px] overflow-hidden bg-[#3c3c3c]! shadow-[0_0_0_2px_#4a4a4a]!">
      <Cell className="w-[38px] bg-[#545454]"><Ico><circle cx="14" cy="14" r="12.500" opacity=".4" /><circle cx="14" cy="14" r="4" fill="currentColor" stroke="none" /></Ico></Cell>
      <Cell className="w-[64px] gap-[5px] text-[#777]"><Ico><path d="M1 26C10 26 9 2 14 2C19 2 18 26 27 26" /></Ico><Chev /></Cell>
    </Btn>
    <Btn className="ml-auto w-[60px] justify-center gap-[5px]"><Ico><path d="M6 9C10 1 23 1 27 9C23 15 12 15 8 11" /><circle cx="17" cy="8" r="3.500" fill="currentColor" stroke="none" /><path d="M2 12L14 22L8 23L4 28Z" fill="currentColor" stroke="none" /></Ico><Chev /></Btn>
    <Btn className="ml-[14px] w-[76px] overflow-hidden">
      <Cell className="w-[37px] bg-[#4772b3] text-white"><Ico><path d="M1 3C10 3 20 14 21 27M4 24L25 3" /><path d="M17 1H27V11Z" fill="currentColor" stroke="none" /><circle cx="4" cy="24" r="3" fill="#4772b3" /></Ico></Cell><Cell className="w-[39px]"><Chev /></Cell>
    </Btn>
    <Btn className="ml-[14px] w-[140px] overflow-hidden">
      <Cell className="w-[36px] bg-[#4772b3] text-white"><Ico><circle cx="18" cy="10" r="9" fill="currentColor" stroke="none" /><path d="M8 10A9 9 0 1 0 19 21" /></Ico></Cell><Cell className="w-[42px]"><Chev /></Cell>
      <Cell className="w-[62px] gap-[6px]"><IMeshEdit /><Chev /></Cell>
    </Btn>
    <Btn className="ml-[14px] w-[36px] justify-center bg-[#4772b3]! text-white"><Ico><path d="M9 7V1H27V21H21" opacity=".7" /><rect x="1" y="6" width="19" height="21" /><path d="M7 12V21H14" strokeDasharray="3 2" /></Ico></Btn>
    <Btn className="ml-[14px] mr-[17px] w-[190px] gap-[2px] overflow-hidden">
      <Cell className="w-[36px] bg-[#4772b3] text-white"><Ico><circle cx="14" cy="14" r="12.500" /><path d="M2 9.500H26M2 18.500H26M14 2C7 8 7 20 14 26M14 2C21 8 21 20 14 26" /></Ico></Cell>
      <Cell className="w-[36px] bg-[#545454] text-[#b4b4b4]"><IBall size={27} /></Cell>
      <Cell className="w-[36px] bg-[#545454] text-[#b4b4b4]"><Ico><circle cx="14" cy="14" r="12.500" /><path d="M14 1V14L5 24A13 13 0 0 1 14 1Z" fill="currentColor" /><path d="M10 25L25 11M15 26L26 15M19 25L26 19" /></Ico></Cell>
      <Cell className="w-[36px] bg-[#545454] text-[#b4b4b4]"><Ico><circle cx="14" cy="14" r="12.500" /><path d="M6 14C6 9 10 6 14 6" strokeWidth="4" /><path d="M14 25L25 14M19 24L25 18" /></Ico></Cell>
      <Cell className="w-[38px]"><Chev /></Cell>
    </Btn>
  </div>
);

const Viewport = () => (
  <div className="relative flex h-[1771px] w-[3058px] flex-col overflow-hidden rounded-[9px] [text-shadow:0_2px_2px_rgba(0,0,0,.5)]">
    <Scene3D />
    <div className="relative flex h-full flex-col">
      <ViewHeader />
      <div className="flex h-[48px] shrink-0 justify-between text-[#e6e6e6]">
        <div className="flex h-full w-[221px] items-center rounded-br-[8px] bg-[#303030]/70 pb-[4px] pl-[16px]">
          <Btn className="w-[187px] gap-[2px] overflow-hidden bg-[#3a3a3a]!">
            <SelBox className="bg-[#4772b3] text-white"><rect x="1" y="1" width="26" height="26" strokeWidth="2.500" strokeDasharray="4 3.500" /></SelBox>
            <SelBox className="bg-[#545454] text-[#c0c0c0]"><path d="M8 0H28V20H20V28H0V8H8Z" fill="currentColor" stroke="none" /></SelBox>
            <SelBox className="bg-[#545454] text-[#c0c0c0]"><path d="M8 0H28V20H20V8H8Z" fill="currentColor" stroke="none" /><path d="M1 9V27H19" strokeDasharray="4 3" /></SelBox>
            <SelBox className="bg-[#545454] text-[#c0c0c0]"><path fillRule="evenodd" d="M8 0H28V20H20V28H0V8H8ZM9 9V19H19V9Z" fill="currentColor" stroke="none" /></SelBox>
            <SelBox className="bg-[#545454] text-[#c0c0c0]"><rect x="8" y="8" width="12" height="12" fill="currentColor" stroke="none" /><path d="M9 1H27V19M1 9V27H19" strokeDasharray="4 3" /></SelBox>
          </Btn>
        </div>
        <div className="flex h-full w-[363px] items-center rounded-bl-[8px] bg-[#303030]/70 pb-[3px] pl-[21px]">
          <IMirror size={30} />
          <Btn className="ml-[7px] w-[100px] gap-px overflow-hidden bg-[#3a3a3a]!">
            <Cell className="w-[33px] bg-[#545454]">X</Cell><Cell className="w-[33px] bg-[#545454]">Y</Cell><Cell className="w-[33px] bg-[#545454]">Z</Cell>
          </Btn>
          <Btn className="ml-[14px] w-[36px] justify-center bg-[#4772b3]! text-white"><Ico><rect x="19" y="0" width="8" height="8" fill="currentColor" stroke="none" /><rect x="1" y="19" width="8" height="8" fill="currentColor" stroke="none" /><path d="M12 7L17 3M7 15V11H11M24 12L18 17M20 20H13M13 14L17 10" opacity=".7" /></Ico></Btn>
          <Btn className="ml-[13px] w-[127px] justify-between pl-[16px] pr-[6px]">Options<Chev /></Btn>
        </div>
      </div>
      <div className="flex flex-1">
        <div className="ml-[15px] mt-[18px]"><Toolbar /></div>
        <div className="ml-[37px] mt-[14px] text-white">
          <p className="h-[36px] leading-[36px]">Right Orthographic</p><p className="h-[36px] leading-[36px]">(22) Cube</p><p className="h-[36px] leading-[36px]">10 Centimeters × 1.005</p>
        </div>
        <div className="ml-auto mr-[15px] mt-[4px] h-[101px] w-[488px] rounded-[8px] bg-[#3c3c3c] text-[#e6e6e6]">
          <div className="flex h-[54px] items-center pl-[16px] pr-[13px]"><ChevDown className="text-[#aaa]" /><span className="ml-[9px] text-white">Transform</span><Grip className="mb-[4px] ml-auto" /></div>
          <div className="flex h-[44px] items-center pl-[17px] text-[#d0d0d0]">Nothing selected</div>
        </div>
        <div className="flex w-[39px] flex-col gap-[8px] bg-[#1a1a1a] pt-[8px] text-[#c8c8c8]">
          {["Item", "Tool", "View", "Edit"].map((t, i) => (
            <div key={t} className={`flex h-[79px] w-[37px] items-center justify-center rounded-r-[8px] border-2 border-l-0 border-[#2c2c2c] ${i === 0 ? "bg-[#303030] text-white" : "bg-[#1d1d1d]"}`}>
              <span className="[writing-mode:vertical-rl]">{t}</span>
            </div>
          ))}
        </div>
      </div>
    </div>
    <div className="pointer-events-none absolute inset-0 rounded-[9px] border-2 border-[#666]/60" />
  </div>
);

/* ---------- timeline ---------- */
const tl = (f: number) => 99.4 + f * 11.382;
const PlayBtns = () => (
  <Btn className="ml-[15px] w-[235px] gap-px overflow-hidden bg-[#3a3a3a]!">
    {["M6 6V22M22 6L10 14L22 22Z", "M1 14L7 7L13 14L7 21ZM26 7L17 14L26 21Z", "M22 5L7 14L22 23Z", "M6 5L21 14L6 23Z", "M27 14L21 7L15 14L21 21ZM2 7L11 14L2 21Z", "M22 6V22M6 6L18 14L6 22Z"].map((d, i) => (
      <Cell key={i} className="w-[38.500px] bg-[#545454]"><Ico><path d={d} fill="currentColor" /></Ico></Cell>
    ))}
  </Btn>
);
const Timeline = () => (
  <div className="relative mt-[7px] flex h-[143px] w-[3058px] flex-col overflow-hidden rounded-[9px] bg-[#303030] text-[#e6e6e6]">
    <div className="flex h-[50px] shrink-0 items-center [text-shadow:0_2px_2px_rgba(0,0,0,.5)]">
      <Btn className="ml-[16px] w-[60px] justify-center gap-[4px]"><Ico><circle cx="14" cy="14" r="13" fill="currentColor" stroke="none" /><path d="M17 4L14 14L18 20" stroke="#282828" strokeWidth="2.500" /></Ico><Chev /></Btn>
      <Btn className="ml-[14px] w-[259px]">
        <Cell className="w-[140px] justify-between! border-r border-[#3a3a3a] pl-[14px] pr-[7px]">Playback<Chev /></Cell>
        <Cell className="w-[119px] justify-between! pl-[14px] pr-[7px]">Keying<Chev /></Cell>
      </Btn>
      <span className="ml-[20px] w-[77px]">View</span><span className="w-[896px]">Marker</span>
      <Btn className="w-[76px] overflow-hidden bg-[#2c2c2c]!"><Cell className="w-[38px] bg-[#545454] text-[#b4b4b4]"><Ico><circle cx="14" cy="14" r="9.500" /></Ico></Cell><Cell className="w-[38px] text-[#555]"><Chev /></Cell></Btn>
      <PlayBtns />
      <Btn className="ml-auto w-[146px] justify-center bg-[#545454]!">22</Btn>
      <Btn className="ml-[15px] mr-[16px] w-[383px] gap-[2px] overflow-hidden bg-[#3a3a3a]!">
        <Cell className="w-[36px] bg-[#545454]"><Ico><circle cx="14" cy="17" r="10.500" /><path d="M14 10V18H19M10 1H18M14 1V6M23 6L26 9" /></Ico></Cell>
        <Cell className="w-[175px] justify-between! bg-[#545454] pl-[31px] pr-[26px]"><span>Start</span><span>1</span></Cell>
        <Cell className="w-[168px] justify-between! bg-[#545454] pl-[30px] pr-[25px]"><span>End</span><span>250</span></Cell>
      </Btn>
    </div>
    <svg width="3058" height="93" viewBox="0 0 3058 93" className="shrink-0">
      <rect width="3058" height="46" fill="#1d1d1d" /><rect y="46" width="3058" height="47" fill="#303030" />
      <rect y="46" width={tl(1)} height="47" fill="#222" /><rect x={tl(250)} y="46" width="200" height="47" fill="#222" />
      {Array.from({ length: 52 }, (_, i) => <rect key={i} x={tl(i * 5) - 1} y="46" width="1.500" height="47" fill={i % 2 ? "#262626" : "#191919"} />)}
      <rect x={tl(1) - 1} y="46" width="2" height="47" fill="#000" /><rect x={tl(250) - 1} y="46" width="2" height="47" fill="#000" />
      <g fontFamily="Inter, sans-serif" fontSize="22" fill="#989898" textAnchor="middle">
        {Array.from({ length: 26 }, (_, i) => <text key={i} x={tl(i * 10)} y="31">{i * 10}</text>)}
      </g>
      <rect x="348.500" y="30" width="3" height="63" fill="#4772b3" />
      <rect x="17" y="72" width="3024" height="15" rx="7.500" fill="#545454" />
      <circle cx="23" cy="79.500" r="6" fill="#303030" stroke="#606060" strokeWidth="1.500" /><circle cx="3035" cy="79.500" r="6" fill="#303030" stroke="#606060" strokeWidth="1.500" />
      <rect x="326" y="6" width="48" height="33" rx="7" fill="#4772b3" />
      <text x="350" y="30" fontFamily="Inter, sans-serif" fontSize="22" fill="#fff" textAnchor="middle">22</text>
      <path d="M1 36L8 43L1 50M3057 36L3050 43L3057 50" stroke="#aaa" strokeWidth="1.500" fill="none" />
    </svg>
    <div className="pointer-events-none absolute inset-0 rounded-[9px] border-2 border-[#3f3f3f]" />
  </div>
);

/* ---------- outliner ---------- */
const Row = ({ children, className = "" }: P) => <div className={`flex h-[40px] shrink-0 items-center pt-px ${className}`}>{children}</div>;
const Name = ({ children, className = "" }: P) => <span className={`pt-[2px] ${className}`}>{children}</span>;
const Vis = ({ closed }: { closed?: boolean }) => (
  <div className="ml-auto mr-[24px] flex gap-[12px] text-[#e0e0e0]">
    {closed ? <Ico className="text-[#aaa]"><path d="M3 12C8 21 20 21 25 12" /></Ico> : <IEye />}
    <ICamera />
  </div>
);
const Outliner = () => (
  <div className="relative flex h-[613px] w-[637px] flex-col overflow-hidden rounded-[9px] bg-[#282828] text-[#c8c8c8]">
    <div className="flex h-[51px] shrink-0 items-center pb-[2px] text-[#e0e0e0]">
      <Btn className="ml-[17px] w-[59px] justify-center gap-[4px]"><Ico><path d="M4 10V24H14M4 15H14" opacity=".7" /><path d="M0 0H9V8H0ZM14 12H27V18H14ZM14 22H27V28H14Z" fill="currentColor" stroke="none" /></Ico><Chev /></Btn>
      <Btn className="ml-[14px] w-[60px] justify-center gap-[4px]"><ILayers /><Chev /></Btn>
      <Btn className="ml-[35px] w-[227px] bg-[#1d1d1d]! pl-[9px]"><ISearch /><span className="ml-[15px] text-[#6c6c6c]">Search</span></Btn>
      <Btn className="ml-[98px] w-[60px] justify-center gap-[5px]"><Ico><path d="M1 1H27L17 13V24L12 27V13Z" /></Ico><Chev /></Btn>
      <Btn className="ml-[13px] w-[37px] justify-center bg-[#484848]!"><Ico className="text-[#aaa]"><path d="M14 3H3V10H25V12M4 14V27H24V14" opacity=".7" /><rect x="10" y="16" width="8" height="4" fill="currentColor" stroke="none" /><circle cx="21" cy="6" r="6" fill="#d0d0d0" stroke="none" /><path d="M21 2V10M17 6H25" stroke="#333" /></Ico></Btn>
    </div>
    <div className="relative flex flex-1 flex-col">
      <Row className="pl-[45px]"><ICollection className="text-[#d4d4d4]" size={27} /><Name className="ml-[14px]">Scene Collection</Name></Row>
      <Row className="bg-[#2b2b2b] pl-[49px] text-white">
        <ChevDown className="text-[#aaa]" />
        <span className="ml-[12px] flex h-[36px] w-[38px] items-center justify-center rounded-[8px] border-2 border-[#686868] bg-[#4a4a4a]"><ICollection className="text-[#e6e6e6]" size={27} /></span>
        <Name className="ml-[9px]">Collection</Name>
        <div className="ml-auto mr-[24px] flex items-center gap-[12px] text-[#e0e0e0]">
          <Ico><rect x="4" y="4" width="20" height="20" rx="2" fill="currentColor" stroke="none" /><path d="M8 14L12.500 19L21 7" stroke="#222" strokeWidth="3" /></Ico><IEye /><ICamera />
        </div>
      </Row>
      <Row>
        <IMeshEdit className="ml-[4px] text-[#e6e6e6]" />
        <ChevRight className="ml-[60px]" />
        <span className="ml-[15px] flex h-[36px] w-[38px] items-center justify-center rounded-[8px] border-2 border-[#686868] bg-[#4a4a4a]"><Ico className="text-[#d08a50]" size={27}><path fillRule="evenodd" d="M0 0H28L14 28ZM8 5H20L14 17Z" fill="currentColor" stroke="none" /></Ico></span>
        <Name className="ml-[9px] w-[99px]">Cube</Name>
        <Ico className="text-[#aaa]"><path d="M2 1H12C20 3 8 12 9 17C10 21 20 20 26 20M20 14L26 20L20 27" /></Ico>
        <IWrench className="ml-[12px] text-[#5f84d8]" />
        <span className="ml-[7px] flex h-[36px] w-[38px] items-center justify-center rounded-[8px] border-2 border-[#4f7a6b] bg-[#25463b]"><IMesh className="text-[#12c398]" size={27} /></span>
        <Vis />
      </Row>
      <Row className="bg-[#2b2b2b] text-[#7c7c7c]"><ChevRight className="ml-[92px]" /><IImage className="ml-[20px] text-[#70503a]" /><Name className="ml-[14px] w-[95px]">front</Name><IImageData className="text-[#6b3c42]" /><Vis closed /></Row>
      <Row><ChevRight className="ml-[92px]" /><IImage className="ml-[20px] text-[#bf8250]" /><Name className="ml-[14px] w-[87px]">side</Name><IImageData className="text-[#a9505a]" /><Vis /></Row>
      <Row className="bg-[#2b2b2b]"><ChevRight className="ml-[92px]" /><IImage className="ml-[20px] text-[#bf8250]" /><Name className="ml-[14px] w-[79px]">top</Name><IImageData className="text-[#a9505a]" /><Vis /></Row>
      {[0, 1, 2, 3, 4, 5, 6, 7, 8].map((i) => <Row key={i} className={i % 2 ? "bg-[#2b2b2b]" : ""} />)}
      <div className="absolute left-[56px] top-[90px] h-[140px] w-px bg-[#5a5a5a]" />
    </div>
    <div className="pointer-events-none absolute inset-0 rounded-[9px] border-2 border-[#3a3a3a]" />
  </div>
);

/* ---------- properties ---------- */
const sideTabs: { i: React.ReactNode; c: string; gap?: boolean; on?: boolean }[] = [
  { c: "text-[#b0b0b0]", i: <Ico><path d="M5 0V14" /><path d="M1 14H9V18L10 24C9 29 1 29 0 24L1 18Z" fill="currentColor" stroke="none" /><path d="M16 1C13 6 15 10 18 11V25C19 29 24 29 25 25V11C28 10 30 6 26 1V7H17Z" fill="currentColor" stroke="none" /></Ico> },
  { gap: true, c: "text-[#b0b0b0]", i: <Ico><path fillRule="evenodd" d="M0 5H4L7 1H16L19 5H28V27H0ZM3 10V24H18V10ZM22 10H26V14H22ZM22 18H26V22H22Z" fill="currentColor" stroke="none" /><path d="M5 13H16M5 17H16M5 21H16" /></Ico> },
  { c: "text-[#b0b0b0]", i: <Ico><path d="M0 0H28V12H24V9H4V12H0Z" fill="currentColor" stroke="none" /><rect x="5" y="10" width="18" height="17" /><path d="M8 26L14 16L20 26Z" fill="currentColor" stroke="none" /></Ico> },
  { c: "text-[#b0b0b0]", i: <ILayers /> },
  { c: "text-[#b0b0b0]", i: <IScene /> },
  { c: "text-[#b1545c]", i: <Ico><circle cx="14" cy="14" r="12" /><path d="M5 7L14 3L16 8L12 13H6ZM10 16L18 15L21 20L15 25Z" fill="currentColor" stroke="none" /><path d="M23 5L27 1M5 23L1 27" /></Ico> },
  { gap: true, c: "text-[#d8d8d8]", i: <ICollectionLine /> },
  { gap: true, c: "text-[#bd7a44]", i: <IObject /> },
  { on: true, c: "text-[#6f9cff]", i: <IWrench fill /> },
  { c: "text-[#5f84d8]", i: <Ico><circle cx="5" cy="5" r="5" fill="currentColor" stroke="none" /><g opacity=".75"><circle cx="25" cy="5" r="3" fill="currentColor" stroke="none" /><circle cx="5" cy="25" r="3" fill="currentColor" stroke="none" /><circle cx="24" cy="24" r="4" fill="currentColor" stroke="none" /><path d="M12 5H24M5 12V24M9 9L23 23" /></g></Ico> },
  { c: "text-[#5f84d8]", i: <Ico><path d="M18 2A12.500 12.500 0 1 0 26 20" opacity=".75" /><circle cx="14" cy="14" r="6" fill="currentColor" stroke="none" /><circle cx="24" cy="4" r="4" fill="currentColor" stroke="none" opacity=".75" /></Ico> },
  { c: "text-[#5f84d8]", i: <Ico><path d="M3 12L18 2C24 -1 29 4 27 10L21 22C12 32 -4 24 3 12Z" /><circle cx="11" cy="17" r="5" strokeWidth="3" /><circle cx="22" cy="6" r="1.500" /></Ico> },
  { c: "text-[#12b58b]", i: <IMesh /> },
  { c: "text-[#b1545c]", i: <Ico><circle cx="14" cy="14" r="12.500" /><path d="M14 1A13 13 0 0 1 27 14L14 17ZM1 14L14 17V27A13 13 0 0 1 1 14Z" fill="currentColor" stroke="none" /></Ico> },
];

const ModHead = ({ icon, name }: { icon: React.ReactNode; name: string }) => (
  <div className="flex h-[37px] items-center">
    <ChevDown className="ml-[17px] text-[#bbb]" /><span className="ml-[10px] w-[52px]">{icon}</span>
    <div className="flex h-[37px] w-[351px] shrink-0 gap-[2px] overflow-hidden rounded-[8px] bg-[#3d3d3d]">
      <Cell className="w-[151px] justify-start! bg-[#1d1d1d] pl-[14px]">{name}</Cell>
      <Cell className="w-[38px] bg-[#545454]"><IMesh /></Cell>
      <Cell className="w-[38px] bg-[#4772b3] text-white"><IMeshEdit /></Cell>
      <Cell className="w-[38px] bg-[#4772b3] text-white"><IMonitor /></Cell>
      <Cell className="w-[38px] bg-[#4772b3] text-white"><ICamera /></Cell>
      <Cell className="w-[38px] bg-[#282828]"><ChevDown /></Cell>
    </div>
    <IX className="ml-[8px]" /><Grip className="ml-auto mr-[13px]" />
  </div>
);
const Label = ({ children, className = "" }: P) => <div className={`mr-[20px] w-[199px] shrink-0 text-right ${className}`}>{children}</div>;
const Field = ({ children, className = "" }: P) => (
  <div className={`flex h-[36px] w-[274px] shrink-0 items-center justify-center rounded-[7px] bg-[#545454] shadow-[0_2px_1px_rgba(0,0,0,.2)] ${className}`}>{children}</div>
);
const Dot = ({ className = "" }: P) => <span className={`ml-[18px] h-[8px] w-[8px] shrink-0 rounded-full bg-[#e6e6e6] ${className}`} />;
const XYZ = ({ on, off }: { on?: boolean; off?: boolean }) => (
  <Field className={`gap-[2px] overflow-hidden bg-[#383838]! ${off ? "text-[#808080]" : ""}`}>
    <Cell className={`w-[88px] ${on ? "bg-[#4772b3] text-white" : off ? "bg-[#474747]" : "bg-[#545454]"}`}>X</Cell>
    <Cell className={`w-[91px] ${off ? "bg-[#474747]" : "bg-[#545454]"}`}>Y</Cell>
    <Cell className={`w-[91px] ${off ? "bg-[#474747]" : "bg-[#545454]"}`}>Z</Cell>
  </Field>
);

const Properties = () => (
  <div className="relative mt-[7px] flex h-[1301px] w-[638px] flex-col overflow-hidden rounded-[9px] bg-[#303030] text-[#e6e6e6] [text-shadow:0_2px_2px_rgba(0,0,0,.35)]">
    <div className="flex h-[50px] shrink-0 items-center">
      <Btn className="ml-[17px] w-[60px] justify-center gap-[6px]"><Ico><rect x="1" y="1" width="26" height="11" rx="5" /><rect x="1" y="16" width="26" height="11" rx="5" /><path d="M6 1H12V12H6A5 5 0 0 1 6 1ZM6 16H18V27H6A5 5 0 0 1 6 16Z" fill="currentColor" /></Ico><Chev /></Btn>
      <Btn className="ml-[131px] w-[226px] bg-[#1d1d1d]! pl-[8px]"><ISearch /><span className="ml-[15px] text-[#6c6c6c]">Search</span></Btn>
      <Btn className="ml-auto mr-[15px] w-[37px] justify-center"><Chev /></Btn>
    </div>
    <div className="flex flex-1">
      <div className="flex w-[57px] shrink-0 flex-col items-end bg-[#1d1d1d] pt-[18px]">
        {sideTabs.map((t, i) => (
          <div key={i} className={`mb-[4px] flex h-[52px] w-[52px] shrink-0 items-center justify-center rounded-l-[8px] ${t.c} ${t.on ? "bg-[#303030]" : ""} ${t.gap ? "mt-[16px]" : ""}`}>{t.i}</div>
        ))}
      </div>
      <div className="ml-[16px] flex w-[551px] flex-col">
        <div className="mt-[17px] flex h-[37px] items-center pl-[5px]">
          <IObject /><span className="ml-[19px] w-[86px]">Cube</span><ChevRight /><IMirror className="ml-[20px]" size={30} /><span className="ml-[17px]">Mirror</span><IPin className="ml-auto mr-[7px] text-[#999]" />
        </div>
        <div className="ml-[2px] mt-[35px] flex h-[38px] w-[547px] items-center rounded-[8px] bg-[#545454] shadow-[0_0_0_2px_#3d3d3d]">
          <Ico className="ml-[12px]" size={20}><path d="M14 1V27M1 14H27" strokeWidth="2.500" /></Ico><span className="flex-1 pl-[2px] text-center">Add Modifier</span>
        </div>
        <div className="mt-[21px] h-[311px] rounded-[8px] bg-[#3d3d3d] pt-[8px]">
          <ModHead name="Subdivision" icon={<Ico><rect x="1" y="1" width="26" height="26" opacity=".7" /><circle cx="14" cy="14" r="9" /></Ico>} />
          <div className="ml-[18px] mt-[23px] flex h-[36px] w-[515px] gap-[2px] overflow-hidden rounded-[7px]">
            <Cell className="w-[255px] bg-[#4772b3] text-white">Catmull-Clark</Cell><Cell className="w-[258px] bg-[#545454]">Simple</Cell>
          </div>
          <div className="mt-[14px] flex items-center"><Label>Levels Viewport</Label><Field className="rounded-b-none">2</Field><Dot /></div>
          <div className="mt-[2px] flex items-center"><Label>Render</Label><Field className="h-[38px]! rounded-t-none">2</Field><Dot /></div>
          <div className="mt-[14px] flex h-[36px] items-center pl-[219px]"><span className="h-[24px] w-[24px] rounded-[4px] bg-[#545454]" /><span className="ml-[9px] w-[245px]">Optimal Display</span><span className="ml-[14px] h-[8px] w-[8px] rounded-full bg-[#e6e6e6]" /></div>
          <div className="mt-[26px] flex h-[36px] items-center pl-[47px]"><ChevRight /><span className="ml-[14px]">Advanced</span></div>
        </div>
        <div className="mt-[5px] h-[452px] rounded-[8px] border-2 border-[#4772b3] bg-[#3d3d3d]">
          <div className="-ml-[2px] mt-[6px] w-[551px]">
            <ModHead name="Mirror" icon={<IMirror size={30} />} />
            <div className="mt-[23px] flex items-center"><Label>Axis</Label><XYZ on /></div>
            <div className="mt-[8px] flex items-center"><Label>Bisect</Label><XYZ /></div>
            <div className="mt-[8px] flex items-center"><Label className="text-[#808080]">Flip</Label><XYZ off /></div>
            <div className="mt-[24px] flex items-center"><Label>Mirror Object</Label>
              <Field className="justify-start! bg-[#1d1d1d]! pl-[8px] pr-[6px]"><IObject /><span className="ml-[15px] text-[#666]">Object</span><Ico className="ml-auto text-[#c8c8c8]"><path d="M15 8L3 22L1 27L6 25L19 12" /><path d="M13 5L22 15L20 17L11 8ZM16 8L21 2C25 -2 30 3 26 7L21 13Z" fill="currentColor" stroke="none" /></Ico></Field>
            </div>
            <div className="mt-[8px] flex h-[36px] items-center pl-[219px]"><span className="h-[24px] w-[24px] rounded-[4px] bg-[#545454]" /><span className="ml-[9px] w-[245px]">Clipping</span><span className="ml-[14px] h-[8px] w-[8px] rounded-full bg-[#e6e6e6]" /></div>
            <div className="mt-[8px] flex items-center"><Label>Merge</Label>
              <span className="flex h-[24px] w-[24px] items-center justify-center rounded-[4px] bg-[#4772b3]"><svg width="18" height="16" viewBox="0 0 18 16" fill="none" stroke="#fff" strokeWidth="3"><path d="M1 8L6.500 14L17 1" /></svg></span>
              <Field className="ml-[16px] w-[234px]!">0.001 m</Field><Dot />
            </div>
            <div className="mt-[8px] flex items-center text-[#808080]"><Label>Bisect Distance</Label><Field className="bg-[#474747]!">0.001 m</Field><Dot className="bg-[#555]!" /></div>
            <div className="mt-[26px] flex h-[36px] items-center pl-[47px]"><ChevRight className="text-[#ccc]" /><span className="ml-[14px]">Data</span></div>
          </div>
        </div>
      </div>
    </div>
    <div className="pointer-events-none absolute inset-0 rounded-[9px] border-2 border-[#3f3f3f]" />
  </div>
);

const Mouse = ({ d }: { d: string }) => (
  <svg width="24" height="32" viewBox="0 0 24 32" className="shrink-0" fill="none" stroke="#989898" strokeWidth="1.800"><rect x="1" y="1" width="22" height="30" rx="6" /><path d={d} fill="#989898" stroke="none" /></svg>
);
const StatusBar = () => (
  <div className="flex h-[41px] shrink-0 items-center bg-[#181818] pb-px pt-[8px] text-[#989898]">
    <span className="ml-[20px]"><Mouse d="M1 16V6A5 5 0 0 1 6 1H11V16Z" /></span><span className="ml-[8px] w-[83px]">Select</span>
    <Mouse d="M9 4H15V18H9Z" /><span className="ml-[9px] w-[140px]">Rotate View</span>
    <Mouse d="M23 16V6A5 5 0 0 0 18 1H13V16Z" /><span className="ml-[8px]">Options</span>
    <div className="ml-auto mr-[28px] flex items-center">
      {["Cube", "Verts:0/197", "Edges:0/358", "Faces:0/161", "Tris:326", "Objects:1/3", "Duration: 00:10+10 (Frame 22/250)", "Memory: 37.2 MiB", "VRAM: 1.8/8.0 GiB", "4.4.3"].map((t, i) => (
        <React.Fragment key={t}>{i > 0 && <i className="mx-[9px] h-[26px] w-[1.500px] bg-[#777]" />}<span>{t}</span></React.Fragment>
      ))}
    </div>
  </div>
);

export default function App() {
  return (
    <div className="flex h-[2093px] w-[3713px] flex-col overflow-hidden whitespace-nowrap bg-[#181818] font-['Inter',sans-serif] text-[22px] leading-[28px] tracking-[-0.3px] tabular-nums">
      <TitleBar />
      <TopBar />
      <div className="flex h-[1922px] shrink-0 pl-[3px] pt-px">
        <div className="flex shrink-0 flex-col"><Viewport /><Timeline /></div>
        <div className="ml-[7px] flex shrink-0 flex-col"><Outliner /><Properties /></div>
        <div className="ml-[4px] w-[3px] bg-[#303030]" />
      </div>
      <StatusBar />
    </div>
  );
}
